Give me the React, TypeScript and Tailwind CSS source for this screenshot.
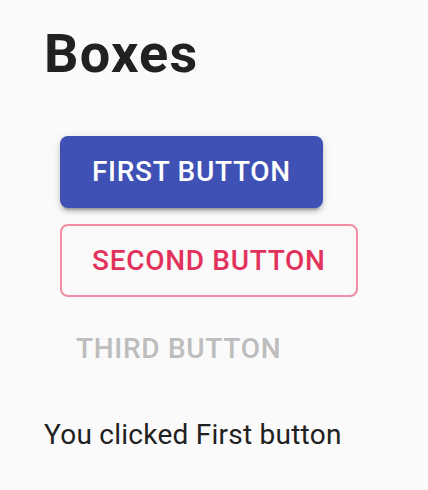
export default function App() {
  return (
    <div className="min-h-[490px] bg-[#fafafa] pl-[44px] pt-[21px] font-['Roboto',sans-serif]">
      <h1 className="text-[54px] font-bold leading-[65px] tracking-[1.25px] text-[#212121]">Boxes</h1>
      <div className="mt-[50px] ml-[16px] flex flex-col items-start gap-[16px]">
        <button className="h-[72px] rounded-[8px] bg-[#3f51b5] px-[32px] text-[28px] font-medium uppercase tracking-[0.7px] text-white shadow-[0_6px_2px_-4px_rgba(0,0,0,0.2),0_4px_4px_0_rgba(0,0,0,0.14),0_2px_10px_0_rgba(0,0,0,0.12)]">
          First button
        </button>
        <button className="h-[73px] rounded-[8px] border-2 border-[#ef8ea3] px-[30px] text-[28px] font-medium uppercase tracking-[0.7px] text-[#e2325c]">
          Second button
        </button>
        <button className="h-[72px] rounded-[8px] px-[16px] text-[28px] font-medium uppercase tracking-[0.7px] text-[#bdbdbd]">
          Third button
        </button>
      </div>
      <p className="mt-[29px] text-[28px] leading-[42px] tracking-[0.25px] text-[#212121]">You clicked First button</p>
    </div>
  )
}
